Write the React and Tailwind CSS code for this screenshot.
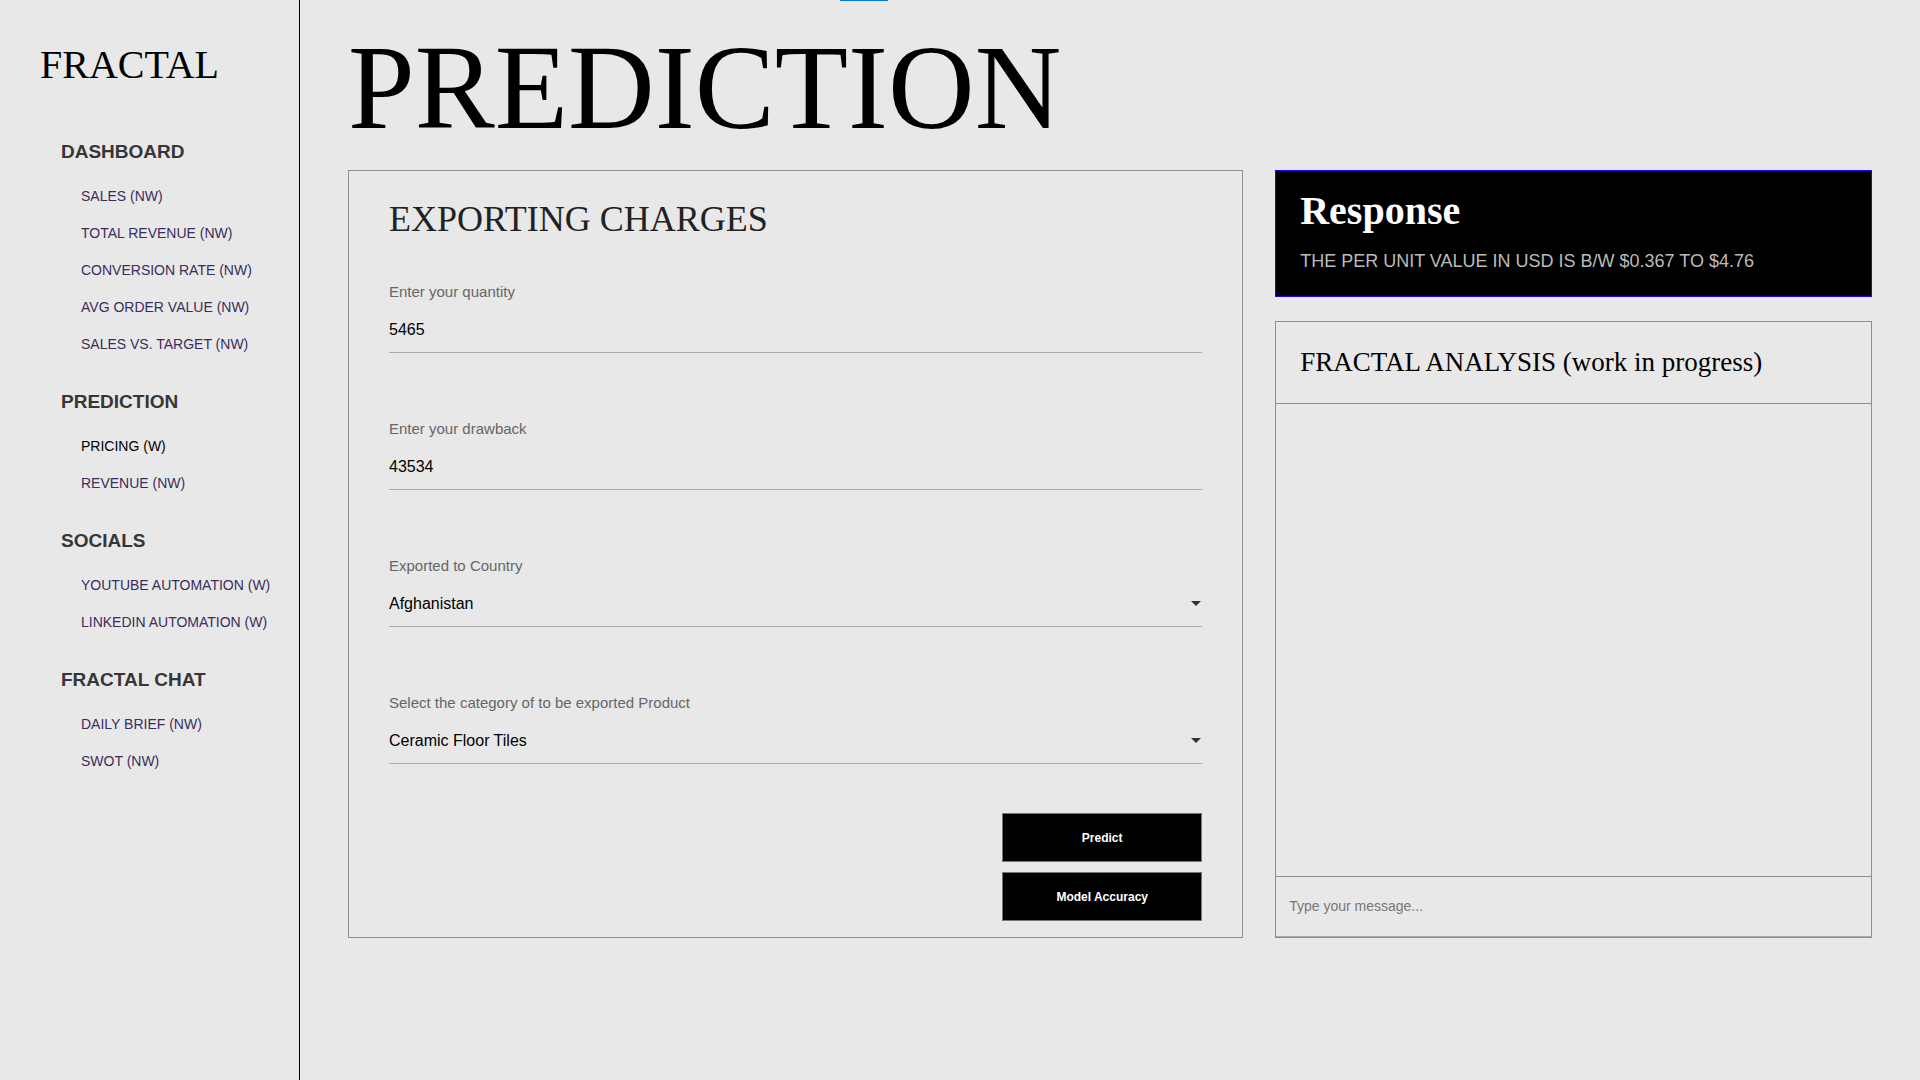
import React from "react";

const DISPLAY = "font-['Liberation_Serif',serif]";

const NAV = [
  {
    title: "DASHBOARD",
    items: [
      "SALES (NW)",
      "TOTAL REVENUE (NW)",
      "CONVERSION RATE (NW)",
      "AVG ORDER VALUE (NW)",
      "SALES VS. TARGET (NW)",
    ],
  },
  { title: "PREDICTION", items: ["PRICING (W)", "REVENUE (NW)"] },
  { title: "SOCIALS", items: ["YOUTUBE AUTOMATION (W)", "LINKEDIN AUTOMATION (W)"] },
  { title: "FRACTAL CHAT", items: ["DAILY BRIEF (NW)", "SWOT (NW)"] },
];

const CURRENT = "PRICING (W)";

function Sidebar() {
  return (
    <aside className="w-[300px] shrink-0 border-r border-black pt-10">
      <div className={`${DISPLAY} pl-10 text-[40px] leading-[50px] text-black`}>FRACTAL</div>
      <nav className="mt-[50px] flex flex-col gap-[27px] pl-[61px]">
        {NAV.map((group) => (
          <section key={group.title}>
            <h2 className="text-[19px] leading-6 font-bold text-[#363636]">{group.title}</h2>
            <ul className="mt-3.5 pl-5">
              {group.items.map((item) => (
                <li key={item} className="text-sm leading-[37px] whitespace-nowrap">
                  <a
                    href="#"
                    aria-current={item === CURRENT ? "page" : undefined}
                    className={item === CURRENT ? "text-black" : "text-[#3b2d5c]"}
                  >
                    {item}
                  </a>
                </li>
              ))}
            </ul>
          </section>
        ))}
      </nav>
    </aside>
  );
}

function Label({ id, children }) {
  return (
    <label htmlFor={id} className="block text-[15px] leading-6 text-[#666]">
      {children}
    </label>
  );
}

const CONTROL =
  "block h-[49px] w-full appearance-none rounded-none border-b border-[#aaa] bg-transparent pt-1 text-base text-black outline-none";

function TextField({ id, label, value }) {
  return (
    <div>
      <Label id={id}>{label}</Label>
      <input id={id} type="text" defaultValue={value} className={CONTROL} />
    </div>
  );
}

function SelectField({ id, label, options }) {
  return (
    <div>
      <Label id={id}>{label}</Label>
      <div className="relative">
        <select id={id} className={CONTROL}>
          {options.map((o) => (
            <option key={o}>{o}</option>
          ))}
        </select>
        <svg
          className="pointer-events-none absolute top-[23px] right-px h-[5px] w-2.5 fill-[#333]"
          viewBox="0 0 10 5"
          aria-hidden="true"
        >
          <path d="M0 0h10L5 5z" />
        </svg>
      </div>
    </div>
  );
}

function ActionButton({ children }) {
  return (
    <button
      type="button"
      className="h-[49px] w-[200px] border border-[#767676] bg-black text-xs font-bold text-white"
    >
      {children}
    </button>
  );
}

export default function App() {
  return (
    <div className="flex min-h-screen bg-[#e8e8e8] font-['Liberation_Sans',Arial,sans-serif]">
      <div className="absolute top-0 left-[840px] flex h-px w-[240px] bg-[#e4e4e4]">
        <div className="w-12 bg-[#0078d7]" />
      </div>
      <Sidebar />
      <main className="min-w-0 flex-1 px-12 pt-12">
        <h1 className={`${DISPLAY} text-[120px] leading-[80px] text-black`}>PREDICTION</h1>
        <div className="mt-[42px] grid grid-cols-[3fr_2fr] gap-8">
          <form className="border border-[#8e8e8e] px-10 pt-7 pb-4">
            <h2 className={`${DISPLAY} text-4xl leading-[40px] text-[#222]`}>EXPORTING CHARGES</h2>
            <div className="mt-[41px] flex flex-col gap-16">
              <TextField id="quantity" label="Enter your quantity" value="5465" />
              <TextField id="drawback" label="Enter your drawback" value="43534" />
              <SelectField id="country" label="Exported to Country" options={["Afghanistan"]} />
              <SelectField
                id="category"
                label="Select the category of to be exported Product"
                options={["Ceramic Floor Tiles"]}
              />
            </div>
            <div className="mt-[49px] flex flex-col items-end gap-2.5">
              <ActionButton>Predict</ActionButton>
              <ActionButton>Model Accuracy</ActionButton>
            </div>
          </form>

          <div className="flex flex-col gap-6">
            <section className="border border-[#2200ff] bg-black px-6 pt-4 pb-[21px]">
              <h2 className={`${DISPLAY} text-[40px] leading-[48px] font-bold text-white`}>
                Response
              </h2>
              <p className="mt-3 text-lg leading-7 text-[#bbb]">
                THE PER UNIT VALUE IN USD IS B/W $0.367 TO $4.76
              </p>
            </section>
            <section className="flex flex-1 flex-col border border-[#8e8e8e]">
              <h2
                className={`${DISPLAY} border-b border-[#8e8e8e] px-6 text-[27px] leading-[81px] text-black`}
              >
                FRACTAL ANALYSIS (work in progress)
              </h2>
              <div className="flex-1" />
              <input
                type="text"
                aria-label="Message"
                placeholder="Type your message..."
                className="h-[61px] w-full border-t border-b border-t-[#8e8e8e] border-b-[#aaa] bg-transparent px-[13px] pb-0.5 text-sm text-black outline-none placeholder:text-[#777]"
              />
            </section>
          </div>
        </div>
      </main>
    </div>
  );
}
